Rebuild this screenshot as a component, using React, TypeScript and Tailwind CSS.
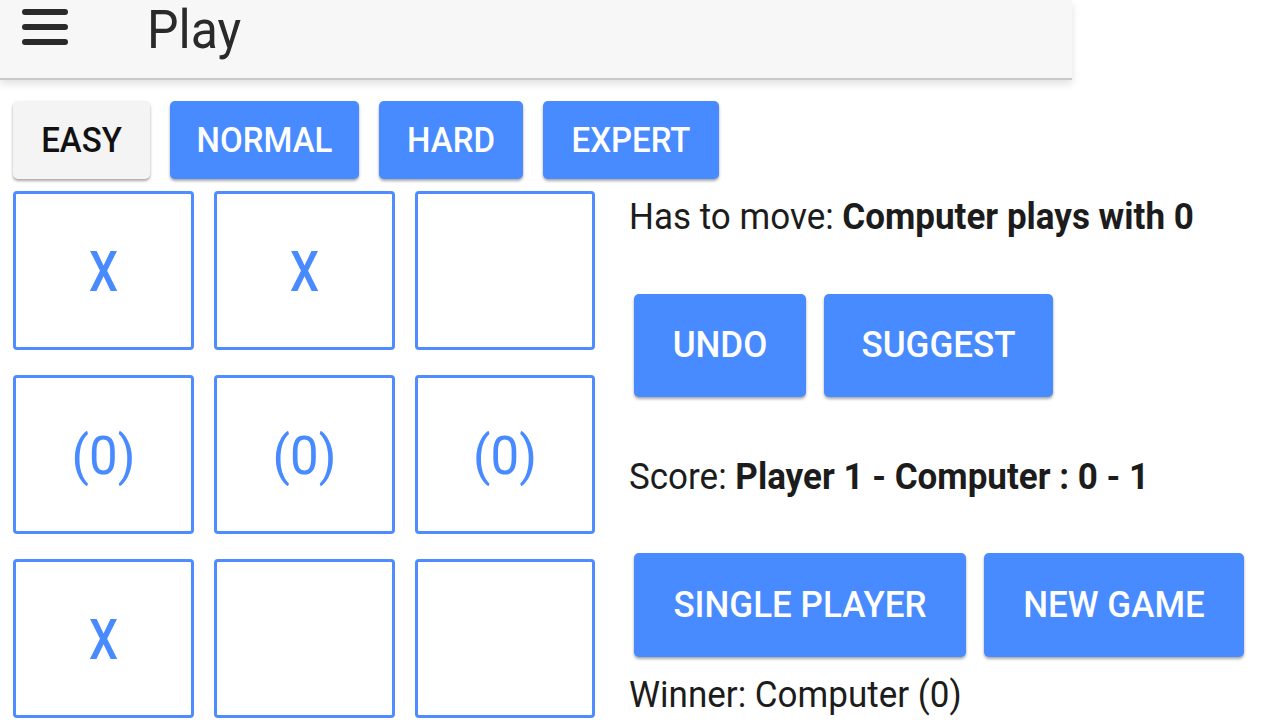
const font = { fontFamily: 'Roboto, "Noto Sans", sans-serif' }

type Cell = '' | 'X' | '(0)'

const board: Cell[] = ['X', 'X', '', '(0)', '(0)', '(0)', 'X', '', '']

function Tall({ children, className = '' }: { children: React.ReactNode; className?: string }) {
  return <span className={`inline-block origin-center scale-y-[1.08] ${className}`}>{children}</span>
}

function BlueButton({ label, className = '' }: { label: string; className?: string }) {
  return (
    <button
      className={`flex items-center justify-center rounded-[5px] bg-[#488aff] font-medium uppercase text-white shadow-[0_2px_3px_rgba(0,0,0,0.35)] ${className}`}
    >
      <Tall>{label}</Tall>
    </button>
  )
}

function App() {
  return (
    <div className="min-h-screen w-[1280px] overflow-hidden bg-white text-[#1c1c1c]" style={font}>
      {/* Toolbar */}
      <header className="flex h-[80px] w-[1072px] items-start border-b-2 border-[#c8c8c8] bg-[#f7f7f7] shadow-[0_4px_8px_rgba(0,0,0,0.12)]">
        <div className="ml-[22px] mt-[9px] flex w-[46px] flex-col gap-[9px]">
          <span className="h-[6px] rounded-full bg-[#2a2a2a]" />
          <span className="h-[6px] rounded-full bg-[#2a2a2a]" />
          <span className="h-[6px] rounded-full bg-[#2a2a2a]" />
        </div>
        <h1 className="ml-[79px] mt-[2px] text-[50px] font-normal leading-[56px] text-[#2a2a2a]">
          <Tall>Play</Tall>
        </h1>
      </header>

      {/* Difficulty */}
      <div className="mt-[21px] flex gap-[20px] pl-[13px]">
        <button className="flex h-[78px] w-[137px] items-center justify-center rounded-[5px] bg-[#f4f4f4] text-[33px] font-medium text-[#111] shadow-[0_2px_3px_rgba(0,0,0,0.35)]">
          <Tall>EASY</Tall>
        </button>
        <BlueButton label="Normal" className="h-[78px] w-[189px] text-[33px]" />
        <BlueButton label="Hard" className="h-[78px] w-[144px] text-[33px]" />
        <BlueButton label="Expert" className="h-[78px] w-[176px] text-[33px]" />
      </div>

      <div className="mt-[12px] flex">
        {/* Board */}
        <div className="ml-[13px] grid grid-cols-[181px_181px_180px] gap-x-[20px] gap-y-[25px]">
          {board.map((c, i) => (
            <div
              key={i}
              className="flex h-[159px] items-center justify-center rounded-[4px] border-[3px] border-[#4f8cff] text-[#488aff]"
            >
              {c === 'X' && (
                <span className="inline-block translate-y-[2px] scale-y-[1.2] text-[46px] font-medium">X</span>
              )}
              {c === '(0)' && (
                <span className="inline-block translate-y-[2px] scale-y-[1.06] text-[51px] font-normal">(0)</span>
              )}
            </div>
          ))}
        </div>

        {/* Status */}
        <div className="ml-[34px] flex flex-col">
          <p className="mt-[6px] text-[35px] leading-[40px]">
            <Tall>
              Has to move: <b className="font-bold">Computer plays with 0</b>
            </Tall>
          </p>
          <div className="mt-[57px] flex gap-[18px] pl-[5px]">
            <BlueButton label="Undo" className="h-[103px] w-[172px] text-[35px]" />
            <BlueButton label="Suggest" className="h-[103px] w-[229px] text-[35px]" />
          </div>
          <p className="mt-[60px] text-[35px] leading-[40px]">
            <Tall>
              Score: <b className="font-bold">Player 1 - Computer : 0 - 1</b>
            </Tall>
          </p>
          <div className="mt-[56px] flex gap-[18px] pl-[5px]">
            <BlueButton label="Single Player" className="h-[104px] w-[332px] text-[35px]" />
            <BlueButton label="New Game" className="h-[104px] w-[260px] text-[35px]" />
          </div>
          <p className="mt-[18px] text-[35px] leading-[40px]">
            <Tall>Winner: Computer (0)</Tall>
          </p>
        </div>
      </div>
    </div>
  )
}

export default App
